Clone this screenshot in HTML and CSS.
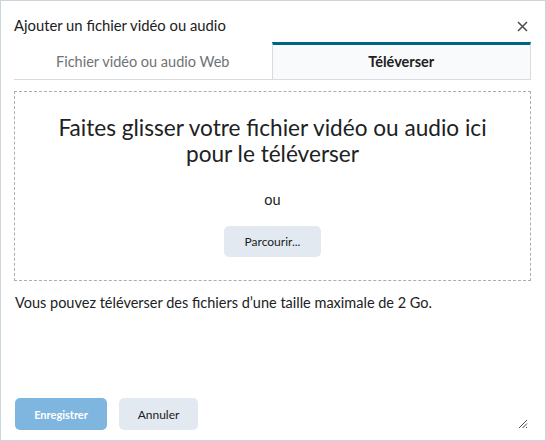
FILE: index.html
```html
<!DOCTYPE html>
<html lang="fr">
<head>
    <meta charset="UTF-8">
    <title>Ajouter un fichier vidéo ou audio</title>
    <link rel="stylesheet" href="styles.css">
</head>
<body>
    <div class="dialog">
        <div class="header">
            <h1>Ajouter un fichier vidéo ou audio</h1>
            <button class="close" aria-label="Fermer">
                <svg width="11" height="11" viewBox="0 0 11 11"><path d="M1 1L10 10M10 1L1 10" stroke="#494c4e" stroke-width="1.5" fill="none"/></svg>
            </button>
        </div>

        <!-- onglets -->
        <div class="tabs">
            <div class="tab">Fichier vidéo ou audio Web</div>
            <div class="tab active">Téléverser</div>
        </div>

        <div class="dropzone">
            <p class="drop-title">Faites glisser votre fichier vidéo ou audio ici<br>pour le téléverser</p>
            <p class="or">ou</p>
            <button class="btn small">Parcourir...</button>
        </div>

        <p class="note">Vous pouvez téléverser des fichiers d’une taille maximale de 2 Go.</p>

        <div class="footer">
            <button class="btn primary">Enregistrer</button>
            <button class="btn">Annuler</button>
            <svg class="grip" width="10" height="10" viewBox="0 0 10 10"><path d="M9 1L1 9M9 4.5L4.5 9M9 8L8 9" stroke="#494c4e" stroke-width="1" fill="none"/></svg>
        </div>
    </div>
</body>
</html>
```

FILE: styles.css
```css
html, body {
    margin: 0;
    padding: 0;
}
body {
    font-family: Lato, "Open Sans", sans-serif;
    color: #202122;
    background-color: #ffffff;
}
.dialog {
    box-sizing: border-box;
    width: 546px;
    height: 441px;
    border: 1px solid #cdd5dc;
    padding: 0 14px 0 13px;
    display: flex;
    flex-direction: column;
}
.header {
    display: flex;
    align-items: center;
    justify-content: space-between;
    height: 34px;
    padding-top: 7px;
}
.header h1 {
    margin: 0;
    font-size: 14.8px;
    font-weight: 400;
    color: #202122;
}
.close {
    border: none;
    background: none;
    padding: 0;
    margin-right: 3px;
    margin-top: 2px;
    width: 11px;
    height: 11px;
    display: flex;
}
.tabs {
    display: flex;
    border-bottom: 1px solid #d8dcdf;
}
.tab {
    flex: 1;
    text-align: center;
    font-size: 14.5px;
    color: #6e7376;
    height: 34px;
    line-height: 34px;
    border-top: 3px solid transparent;
}
.tab.active {
    background-color: #f9fafb;
    border-top-color: #006580;
    border-left: 1px solid #d8dcdf;
    border-right: 1px solid #d8dcdf;
    color: #202122;
    font-weight: 700;
}
.dropzone {
    margin-top: 11px;
    height: 188px;
    border: 1px dashed #a9aeb2;
    text-align: center;
}
.drop-title {
    margin: 23px 0 0;
    font-size: 22.6px;
    line-height: 26px;
}
.or {
    margin: 24px 0 0;
    font-size: 14.5px;
    line-height: 18px;
}
.btn {
    font-family: Lato, "Open Sans", sans-serif;
    border: none;
    border-radius: 5px;
    background-color: #e3e9f1;
    color: #202122;
    font-size: 12px;
    font-weight: 400;
    height: 32px;
    padding: 0 24px;
}
.btn.small {
    margin-top: 17px;
    height: 31px;
    width: 97px;
    padding: 0;
    font-size: 12px;
}
.btn.primary {
    background-color: #7fb6e0;
    color: #ffffff;
    font-weight: 700;
    font-size: 11px;
}
.note {
    margin: 13px 0 0 1px;
    font-size: 14.5px;
}
.footer {
    margin-top: auto;
    margin-bottom: 10px;
    display: flex;
    align-items: center;
    gap: 12px;
    padding-left: 1px;
}
.footer .btn.primary {
    width: 92px;
    padding: 0;
}
.footer .btn {
    width: 79px;
    padding: 0;
}
.grip {
    margin-left: auto;
    margin-top: 20px;
    margin-right: 3px;
}
```
